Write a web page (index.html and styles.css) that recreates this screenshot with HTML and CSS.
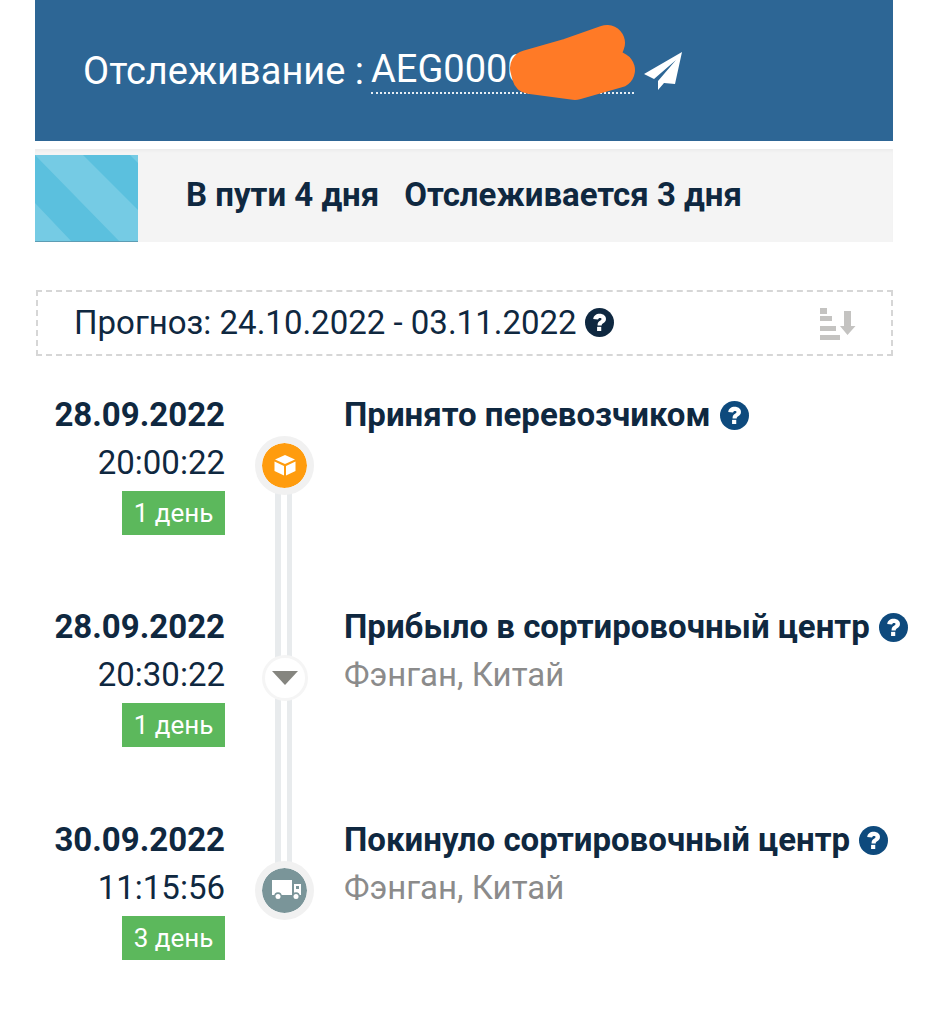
FILE: index.html
```html
<!DOCTYPE html>
<html lang="ru">
<head>
    <meta charset="UTF-8">
    <meta name="viewport" content="width=device-width, initial-scale=1.0">
    <title>Отслеживание</title>
    <link rel="stylesheet" href="styles.css">
</head>
<body>
    <svg class="defs" width="0" height="0" aria-hidden="true">
        <symbol id="help" viewBox="0 0 30 30">
            <circle cx="15" cy="15" r="15" fill="currentColor"/>
            <path d="M8.500 11.500c.3-3.400 3-5.500 6.700-5.500 3.700 0 6.500 2.200 6.500 5.300 0 2.200-1.200 3.400-2.900 4.400-1.100.7-1.500 1.100-1.500 2.300h-4.300c0-2.600.8-3.800 2.600-4.900 1-.6 1.500-1 1.500-1.700 0-.7-.7-1.100-1.600-1.100-1.100 0-1.800.6-2 1.700z" fill="#fff"/>
            <rect x="12.500" y="19.500" width="4.300" height="4.300" fill="#fff"/>
        </symbol>
    </svg>

    <div class="page">
        <header class="track-head">
            <span class="track-label">Отслеживание :</span>
            <span class="track-number">AEG0000</span>
            <svg class="plane" width="38" height="38" viewBox="0 0 38 38">
                <path d="M38 0 0 22l10 5L32 8 14 29v9l6-7 11 1z" fill="#fff"/>
            </svg>
            <svg class="scribble" width="150" height="85" viewBox="0 0 150 85">
                <path d="M28 50 70 38 107 25 100 42 117 52 75 64 30 58Z" fill="#ff7a26" stroke="#ff7a26" stroke-width="36" stroke-linejoin="round"/>
            </svg>
        </header>

        <div class="days-bar">
            <svg class="stripes" width="103" height="87" viewBox="0 0 103 87">
                <rect width="103" height="87" fill="#5bc0de"/>
                <path d="M0 0H48L103 55V87H85ZM0 48 37 87H0ZM95 0H103V8Z" fill="#75cbe4"/>
                <rect y="86" width="103" height="1" fill="#5d9db4"/>
            </svg>
            <div class="days-text">
                <span>В пути 4 дня</span>
                <span>Отслеживается 3 дня</span>
            </div>
        </div>

        <div class="forecast">
            <span class="forecast-text">Прогноз: 24.10.2022 - 03.11.2022</span>
            <svg class="help help-dark"><use href="#help"/></svg>
            <svg class="sort" width="36" height="33" viewBox="0 0 36 33">
                <path d="M0 0H7V6H0ZM0 8H12V13H0ZM0 18H16V23H0ZM0 27H20V32H0Z" fill="#c4c3c1"/>
                <path d="M24 3H31V18H35.500L27.500 27 20 18H24Z" fill="#c4c3c1"/>
            </svg>
        </div>

        <ul class="events">
            <li class="event">
                <div class="when">
                    <div class="date">28.09.2022</div>
                    <div class="time">20:00:22</div>
                    <div class="badge">1 день</div>
                </div>
                <div class="axis">
                    <div class="node node-orange">
                        <svg width="24" height="24" viewBox="0 0 24 24">
                            <path d="M12 2 22 6.500 12 11 2 6.500Z" fill="#fff"/>
                            <path d="M1.500 8.500 11 13V22.500L1.500 18ZM22.500 8.500 13 13V22.500L22.500 18Z" fill="#fff"/>
                        </svg>
                    </div>
                </div>
                <div class="info">
                    <div class="status">Принято перевозчиком <svg class="help"><use href="#help"/></svg></div>
                </div>
            </li>
            <li class="event">
                <div class="when">
                    <div class="date">28.09.2022</div>
                    <div class="time">20:30:22</div>
                    <div class="badge">1 день</div>
                </div>
                <div class="axis">
                    <div class="node node-plain">
                        <svg width="26" height="14" viewBox="0 0 26 14">
                            <path d="M0 0H26L13 14Z" fill="#85857f"/>
                        </svg>
                    </div>
                </div>
                <div class="info">
                    <div class="status">Прибыло в сортировочный центр <svg class="help"><use href="#help"/></svg></div>
                    <div class="place">Фэнган, Китай</div>
                </div>
            </li>
            <li class="event">
                <div class="when">
                    <div class="date">30.09.2022</div>
                    <div class="time">11:15:56</div>
                    <div class="badge">3 день</div>
                </div>
                <div class="axis">
                    <div class="node node-grey">
                        <svg width="32" height="22" viewBox="0 0 32 22">
                            <path d="M3 1H23V16H3Z" fill="#fff"/>
                            <path d="M25 5H32V16H25Z" fill="#fff"/>
                            <path d="M27 7H30V10H27Z" fill="#7a9599"/>
                            <circle cx="9" cy="17" r="3.800" fill="#7a9599"/>
                            <circle cx="27" cy="17" r="3.800" fill="#7a9599"/>
                            <circle cx="9" cy="17.500" r="2.500" fill="#fff"/>
                            <circle cx="27" cy="17.500" r="2.500" fill="#fff"/>
                        </svg>
                    </div>
                </div>
                <div class="info">
                    <div class="status">Покинуло сортировочный центр <svg class="help"><use href="#help"/></svg></div>
                    <div class="place">Фэнган, Китай</div>
                </div>
            </li>
        </ul>
    </div>
</body>
</html>
```

FILE: styles.css
```css
body {
    margin: 0;
    background-color: #fff;
    font-family: Roboto, "Liberation Sans", sans-serif;
    color: #0f2840;
    overflow-x: hidden;
}
.defs {
    display: block;
    height: 0;
}
.page {
    padding: 0 35px;
}

/* header */
.track-head {
    position: relative;
    display: flex;
    align-items: center;
    height: 141px;
    padding-left: 48px;
    background-color: #2d6695;
    color: #fff;
    font-size: 38px;
}
.track-label {
    margin-right: 7px;
    white-space: nowrap;
}
.track-number {
    display: inline-block;
    width: 263px;
    padding-bottom: 2px;
    border-bottom: 2px dotted #e6eef4;
    line-height: 42px;
}
.plane {
    margin-left: 10px;
}
.scribble {
    position: absolute;
    left: 465px;
    top: 18px;
}

/* days bar */
.days-bar {
    display: flex;
    align-items: flex-end;
    height: 93px;
    margin-top: 8px;
    background-color: #f4f4f4;
    box-shadow: inset 0 3px 3px -1px #ececec;
}
.stripes {
    display: block;
}
.days-text {
    display: flex;
    gap: 25px;
    align-self: center;
    margin: 0 0 3px 48px;
    font-size: 33px;
    font-weight: 700;
    white-space: nowrap;
}

/* forecast */
.forecast {
    display: flex;
    align-items: center;
    box-sizing: border-box;
    height: 66px;
    margin: 48px 0 0 1px;
    padding: 0 35px 2px 36px;
    border: 2px dashed #d6d6d6;
    font-size: 33px;
}
.forecast-text {
    white-space: nowrap;
}
.sort {
    margin-left: auto;
    margin-top: 4px;
}

/* help icon */
.help {
    width: 29px;
    height: 29px;
    margin-left: 1px;
    vertical-align: -4px;
    color: #0e4a7d;
}
.help-dark {
    margin-left: 8px;
    color: #0f2840;
}

/* timeline */
.events {
    list-style: none;
    margin: 0;
    padding: 0;
}
.event {
    display: grid;
    grid-template-columns: 190px 119px 1fr;
    height: 212.5px;
}
.event:first-child {
    margin-top: 34.5px;
}
.when {
    text-align: right;
}
.date {
    font-size: 33px;
    font-weight: 700;
    line-height: 48px;
}
.time {
    font-size: 33px;
    line-height: 48px;
}
.badge {
    display: inline-block;
    width: 103px;
    height: 44px;
    margin-top: 4px;
    background-color: #5cb85c;
    color: #fff;
    font-size: 26px;
    line-height: 44px;
    text-align: center;
}
.axis {
    position: relative;
    display: flex;
    justify-content: center;
    padding-top: 45px;
}
/* the rail runs on to the next node */
.axis::after {
    content: "";
    position: absolute;
    left: 50px;
    top: 72px;
    box-sizing: border-box;
    width: 17px;
    height: 212px;
    border-left: 6px solid #e8ebed;
    border-right: 5px solid #e8ebed;
    background-color: #fff;
}
.event:last-child .axis::after {
    display: none;
}
.node {
    position: relative;
    z-index: 1;
    display: flex;
    align-items: center;
    justify-content: center;
    box-sizing: border-box;
    width: 59px;
    height: 59px;
    border: 7px solid #f1f1f1;
    border-radius: 50%;
}
.node-orange {
    background-color: #ff9c0e;
    background-clip: padding-box;
}
.node-grey {
    background-color: #7a9599;
    background-clip: padding-box;
}
.node-plain {
    width: 46px;
    height: 46px;
    margin-top: 7px;
    border: 3px solid #f5f5f5;
    background-color: #fff;
}
.status {
    font-size: 33px;
    font-weight: 700;
    line-height: 48px;
    white-space: nowrap;
}
.place {
    font-size: 33px;
    line-height: 48px;
    color: #8b8b8b;
}
```
